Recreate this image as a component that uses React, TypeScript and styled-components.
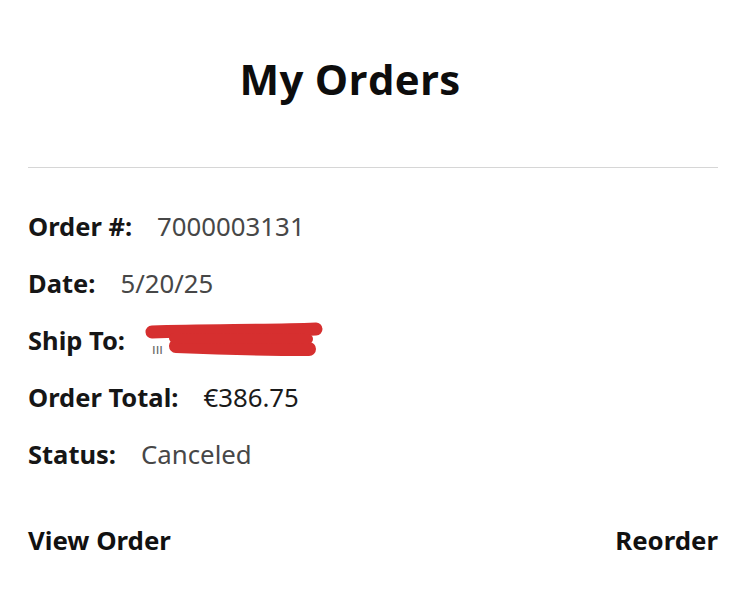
import React from "react";
import styled, { createGlobalStyle } from "styled-components";

const GlobalStyle = createGlobalStyle`
  html, body {
    margin: 0;
    padding: 0;
    background: #fff;
  }
  body {
    font-family: "Noto Sans", "Open Sans", sans-serif;
    color: #111;
  }
`;

const Page = styled.div`
  width: 746px;
  height: 596px;
  box-sizing: border-box;
  padding: 0 28px;
  display: flex;
  flex-direction: column;
`;

const Title = styled.h1`
  margin: 52px 0 0;
  padding-right: 46px;
  text-align: center;
  font-family: "Open Sans", "Noto Sans", sans-serif;
  font-size: 42px;
  font-weight: 700;
  letter-spacing: 0.3px;
  line-height: 54px;
  color: #0d0d0d;
`;

const Divider = styled.hr`
  margin: 61px 0 0;
  border: 0;
  height: 1px;
  background: #d6d6d6;
`;

const Details = styled.dl`
  margin: 40px 0 0;
  display: flex;
  flex-direction: column;
  gap: 21px;
`;

const Row = styled.div`
  display: flex;
  align-items: center;
  gap: 25px;
  height: 36px;
`;

const Label = styled.dt`
  font-size: 25.5px;
  font-weight: 700;
  color: #161616;
`;

const Value = styled.dd<{ $dark?: boolean }>`
  margin: 0;
  font-size: 25.8px;
  font-weight: 400;
  color: ${({ $dark }) => ($dark ? "#1a1a1a" : "#474747")};
`;

const Redacted = styled.dd`
  position: relative;
  margin: 0;
  width: 180px;
  height: 36px;
  font-size: 14px;
  color: #666;
  display: flex;
  align-items: flex-end;
  padding-left: 2px;
`;

const Scribble = styled.svg`
  position: absolute;
  left: -6px;
  top: -3px;
`;

const Actions = styled.div`
  margin-top: 50px;
  display: flex;
  justify-content: space-between;
`;

const Action = styled.a`
  font-size: 25.8px;
  font-weight: 700;
  color: #111;
  cursor: pointer;
`;

const rows = [
  { label: "Order #:", value: "7000003131" },
  { label: "Date:", value: "5/20/25" },
];

const rows2 = [
  { label: "Order Total:", value: "€386.75", dark: true },
  { label: "Status:", value: "Canceled" },
];

export default function App() {
  return (
    <>
      <GlobalStyle />
      <Page>
        <Title>My Orders</Title>
        <Divider />
        <Details>
          {rows.map((r) => (
            <Row key={r.label}>
              <Label>{r.label}</Label>
              <Value>{r.value}</Value>
            </Row>
          ))}
          <Row>
            <Label>Ship To:</Label>
            <Redacted>
              ııı
              <Scribble width="190" height="44" viewBox="0 0 190 44">
                <path
                  d="M8 13 C 60 11, 120 12, 172 10"
                  stroke="#d62f2f"
                  strokeWidth="13"
                  strokeLinecap="round"
                  fill="none"
                />
                <path
                  d="M32 27 C 80 29, 130 30, 165 30"
                  stroke="#d62f2f"
                  strokeWidth="14"
                  strokeLinecap="round"
                  fill="none"
                />
                <path
                  d="M30 19 L 164 20"
                  stroke="#d62f2f"
                  strokeWidth="10"
                  strokeLinecap="round"
                  fill="none"
                />
              </Scribble>
            </Redacted>
          </Row>
          {rows2.map((r) => (
            <Row key={r.label}>
              <Label>{r.label}</Label>
              <Value $dark={r.dark}>{r.value}</Value>
            </Row>
          ))}
        </Details>
        <Actions>
          <Action>View Order</Action>
          <Action>Reorder</Action>
        </Actions>
      </Page>
    </>
  );
}
